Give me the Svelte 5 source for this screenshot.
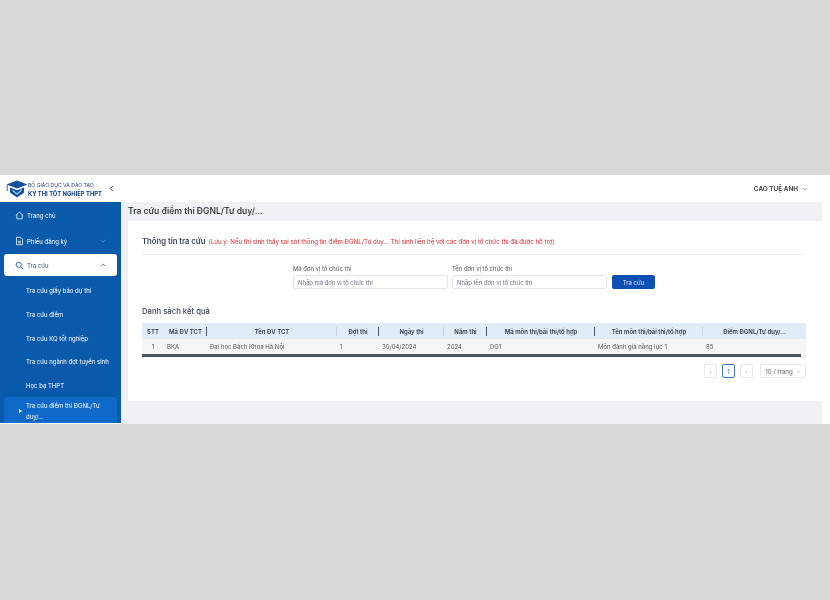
<script>
  const menuSub = [
    { label: "Tra cứu giấy báo dự thi" },
    { label: "Tra cứu điểm" },
    { label: "Tra cứu KQ tốt nghiệp" },
    { label: "Tra cứu ngành đợt tuyển sinh" },
    { label: "Học bạ THPT" }
  ];

  const columns = [
    { title: "STT", width: 22 },
    { title: "Mã ĐV TCT", width: 43, sep: "dark" },
    { title: "Tên ĐV TCT", width: 130, sep: "light" },
    { title: "Đợt thi", width: 42, sep: "dark" },
    { title: "Ngày thi", width: 65, sep: "light" },
    { title: "Năm thi", width: 43, sep: "dark" },
    { title: "Mã môn thi/bài thi/tổ hợp", width: 108, sep: "dark" },
    { title: "Tên môn thi/bài thi/tổ hợp", width: 108, sep: "light" },
    { title: "Điểm ĐGNL/Tư duy/...", width: 103 }
  ];

  const row = ["1", "BKA", "Đại học Bách Khoa Hà Nội", "1", "30/04/2024", "2024", "DG1", "Môn đánh giá năng lực 1", "85"];
</script>

<div class="page">
  <div class="app">
    <header class="topbar">
      <div class="brand">
        <svg class="logo" viewBox="0 0 22 18" width="22" height="18">
          <path d="M11 0.5 L21.5 4.5 L11 8.5 L0.5 4.5 Z" fill="#12509e" />
          <path d="M4 7.5 L11 10.2 L18 7.5 V12.5 C15.5 14.5 13 16 11 17.5 C9 16 6.5 14.5 4 12.5 Z" fill="#12509e" />
          <path d="M6.5 10.5 L11 14 L16 9.5" fill="none" stroke="#8fc3ee" stroke-width="1.4" />
          <path d="M1.2 5 V11" stroke="#12509e" stroke-width="0.9" />
        </svg>
        <div class="brand-text">
          <span class="brand-top">BỘ GIÁO DỤC VÀ ĐÀO TẠO</span>
          <span class="brand-name">KỲ THI TỐT NGHIỆP THPT</span>
        </div>
        <svg class="collapse" viewBox="0 0 6 8" width="5" height="7">
          <path d="M4.5 1 L1.5 4 L4.5 7" fill="none" stroke="#333" stroke-width="1.1" />
        </svg>
      </div>
      <div class="user">
        <span>CAO TUỆ ANH</span>
        <svg viewBox="0 0 8 5" width="6" height="4">
          <path d="M1 1 L4 4 L7 1" fill="none" stroke="#666" stroke-width="0.8" />
        </svg>
      </div>
    </header>

    <div class="body">
      <aside class="sidebar">
        <div class="menu-item">
          <svg viewBox="0 0 12 12" width="9" height="9">
            <path d="M1 6 L6 1.5 L11 6 M2.5 5 V10.5 H9.5 V5" fill="none" stroke="#fff" stroke-width="1" />
          </svg>
          <span>Trang chủ</span>
        </div>
        <div class="menu-item">
          <svg viewBox="0 0 12 12" width="9" height="10">
            <path d="M2 1 H7.5 L10 3.5 V11 H2 Z M4 6.5 H8 M4 8.5 H8" fill="none" stroke="#fff" stroke-width="1" />
          </svg>
          <span>Phiếu đăng ký</span>
          <svg class="caret" viewBox="0 0 8 5" width="6" height="4">
            <path d="M1 1 L4 4 L7 1" fill="none" stroke="#5d93cf" stroke-width="1" />
          </svg>
        </div>
        <div class="menu-item active">
          <svg viewBox="0 0 12 12" width="9" height="9">
            <circle cx="5" cy="5" r="3.5" fill="none" stroke="#1a5aa8" stroke-width="1.1" />
            <path d="M7.6 7.6 L11 11" stroke="#1a5aa8" stroke-width="1.1" />
          </svg>
          <span>Tra cứu</span>
          <svg class="caret" viewBox="0 0 8 5" width="6" height="4">
            <path d="M1 4 L4 1 L7 4" fill="none" stroke="#555" stroke-width="1" />
          </svg>
        </div>
        <ul class="submenu">
          {#each menuSub as item}
            <li>{item.label}</li>
          {/each}
          <li class="current">
            <span class="arrow"></span>
            <span>Tra cứu điểm thi ĐGNL/Tư duy/...</span>
          </li>
        </ul>
      </aside>

      <main class="content">
        <h1>Tra cứu điểm thi ĐGNL/Tư duy/...</h1>
        <section class="card">
          <div class="card-head">
            <h2>Thông tin tra cứu</h2>
            <span class="note">(Lưu ý: Nếu thí sinh thấy sai sót thông tin điểm ĐGNL/Tư duy... Thí sinh liên hệ với các đơn vị tổ chức thi đã được hỗ trợ)</span>
          </div>

          <form class="search">
            <label>
              <span>Mã đơn vị tổ chức thi</span>
              <input placeholder="Nhập mã đơn vị tổ chức thi" />
            </label>
            <label>
              <span>Tên đơn vị tổ chức thi</span>
              <input placeholder="Nhập tên đơn vị tổ chức thi" />
            </label>
            <button type="button">Tra cứu</button>
          </form>

          <h3>Danh sách kết quả</h3>
          <div class="table-wrap">
            <table>
              <colgroup>
                {#each columns as col}
                  <col style="width: {col.width}px" />
                {/each}
              </colgroup>
              <thead>
                <tr>
                  {#each columns as col}
                    <th class={col.sep ? "sep-" + col.sep : ""}>{col.title}</th>
                  {/each}
                </tr>
              </thead>
              <tbody>
                <tr>
                  {#each row as cell}
                    <td>{cell}</td>
                  {/each}
                </tr>
              </tbody>
            </table>
            <div class="scrollbar"></div>
          </div>

          <div class="pagination">
            <span class="page-btn muted">‹</span>
            <span class="page-btn on">1</span>
            <span class="page-btn muted">›</span>
            <span class="page-size">10 / trang
              <svg viewBox="0 0 8 5" width="5" height="3">
                <path d="M1 1 L4 4 L7 1" fill="none" stroke="#aaa" stroke-width="1" />
              </svg>
            </span>
          </div>
        </section>
      </main>
    </div>
  </div>
</div>

<style>
  :global(body) {
    background: #d9d9d9;
    font-family: Inter, "Liberation Sans", sans-serif;
  }

  .page {
    box-sizing: border-box;
    height: 600px;
    padding-top: 175px;
    overflow: hidden;
  }

  .app {
    background: #fff;
    display: flex;
    filter: blur(0.45px);
    flex-direction: column;
    height: 249px;
    overflow: hidden;
  }

  .topbar {
    align-items: center;
    display: flex;
    flex: 0 0 27px;
    justify-content: space-between;
    padding-right: 22px;
  }

  .brand {
    align-items: center;
    display: flex;
    padding-left: 6px;
  }

  .brand-text {
    display: flex;
    flex-direction: column;
    line-height: 8px;
    margin-top: 2px;
  }

  .brand-top {
    color: #1f3f72;
    font-size: 5.1px;
  }

  .brand-name {
    color: #12408a;
    font-size: 5.85px;
    font-weight: 700;
    margin-top: 1px;
  }

  .collapse {
    margin-left: 7px;
  }

  .user {
    align-items: center;
    color: #333;
    display: flex;
    font-size: 6.4px;
    font-weight: 600;
    gap: 4px;
  }

  .body {
    display: flex;
    flex: 1;
    min-height: 0;
  }

  .sidebar {
    background: #0a5aab;
    box-sizing: border-box;
    color: #fff;
    flex: 0 0 121px;
    height: 221px;
    overflow: hidden;
    padding: 0 4px;
  }

  .menu-item {
    align-items: center;
    border-radius: 3px;
    display: flex;
    font-size: 6px;
    gap: 3px;
    height: 26px;
    padding: 0 11px;
  }

  .menu-item .caret {
    margin-left: auto;
  }

  .active {
    background: #fff;
    color: #35507a;
    height: 22px;
  }

  .submenu {
    font-size: 6px;
    list-style: none;
    margin: 3px 0 0;
    padding: 0;
  }

  .submenu li {
    align-items: center;
    display: flex;
    height: 23.7px;
    padding-left: 22px;
  }

  .submenu li.current {
    background: #0f69c8;
    border-radius: 3px 3px 0 0;
    gap: 4px;
    height: 27px;
    line-height: 11px;
    padding-left: 15px;
    padding-right: 12px;
  }

  .arrow {
    border-bottom: 2.5px solid transparent;
    border-left: 3px solid #fff;
    border-top: 2.5px solid transparent;
    flex: none;
  }

  .content {
    background: #eff1f5;
    box-sizing: border-box;
    flex: 0 0 701px;
    padding: 0 0 0 7px;
  }

  h1 {
    color: #3a3f47;
    font-size: 8.55px;
    font-weight: 600;
    line-height: 19px;
    margin: 0;
  }

  .card {
    background: #fff;
    box-sizing: border-box;
    height: 180px;
    padding: 0 16px 0 14px;
  }

  .card-head {
    align-items: baseline;
    border-bottom: 1px solid #eef0f3;
    display: flex;
    gap: 3px;
    height: 33px;
    line-height: 41px;
    white-space: nowrap;
  }

  h2 {
    color: #3c4452;
    font-size: 7.7px;
    font-weight: 600;
    margin: 0;
  }

  .note {
    color: #e8262b;
    font-size: 6.15px;
  }

  .search {
    align-items: flex-end;
    display: flex;
    gap: 4px;
    margin-left: 151px;
    margin-top: 10px;
  }

  .search label {
    color: #555;
    display: flex;
    flex-direction: column;
    font-size: 5.9px;
    gap: 3px;
    width: 155px;
  }

  .search input {
    border: 1px solid #e4e8ee;
    border-radius: 2px;
    box-sizing: border-box;
    font: inherit;
    height: 14px;
    outline: none;
    padding: 0 4px;
    width: 100%;
  }

  .search input::placeholder {
    color: #6b7280;
  }

  .search button {
    background: #0e4fb4;
    border: none;
    border-radius: 2px;
    color: #dfe9f8;
    font: inherit;
    font-size: 6px;
    height: 14px;
    margin-left: 1px;
    width: 43px;
  }

  h3 {
    color: #3c4452;
    font-size: 7.7px;
    font-weight: 500;
    line-height: 10px;
    margin: 18px 0 6px;
  }

  .table-wrap {
    width: 664px;
  }

  table {
    border-collapse: collapse;
    font-size: 6px;
    table-layout: fixed;
    width: 664px;
  }

  th {
    background: #e0ecf8;
    box-sizing: border-box;
    color: #2f3a4b;
    font-weight: 600;
    height: 16px;
    padding: 0;
    position: relative;
    text-align: center;
    white-space: nowrap;
  }

  th.sep-dark::after,
  th.sep-light::after {
    background: #4a5a72;
    content: "";
    height: 9px;
    position: absolute;
    right: 0;
    top: 4px;
    width: 1px;
  }

  th.sep-light::after {
    background: #c4d2e4;
  }

  td {
    background: #f6f6f5;
    color: #555;
    height: 15px;
    padding: 0 0 0 3px;
    white-space: nowrap;
  }

  td:first-child {
    padding: 0;
    text-align: center;
  }

  .scrollbar {
    background: #4b5563;
    height: 3px;
    width: 659px;
  }

  .pagination {
    align-items: center;
    display: flex;
    gap: 5px;
    justify-content: flex-end;
    margin-top: 7px;
    width: 664px;
  }

  .page-btn {
    align-items: center;
    border: 1px solid #e6e8ec;
    border-radius: 2px;
    box-sizing: border-box;
    color: #333;
    display: flex;
    font-size: 6px;
    height: 14px;
    justify-content: center;
    width: 13px;
  }

  .page-btn.muted {
    color: #b5b5b5;
  }

  .page-btn.on {
    border-color: #3a78c8;
    color: #2a6ac0;
  }

  .page-size {
    align-items: center;
    border: 1px solid #e6e8ec;
    border-radius: 2px;
    box-sizing: border-box;
    color: #666;
    display: flex;
    font-size: 6.2px;
    gap: 3px;
    height: 14px;
    justify-content: center;
    margin-left: 2px;
    width: 46px;
  }
</style>
